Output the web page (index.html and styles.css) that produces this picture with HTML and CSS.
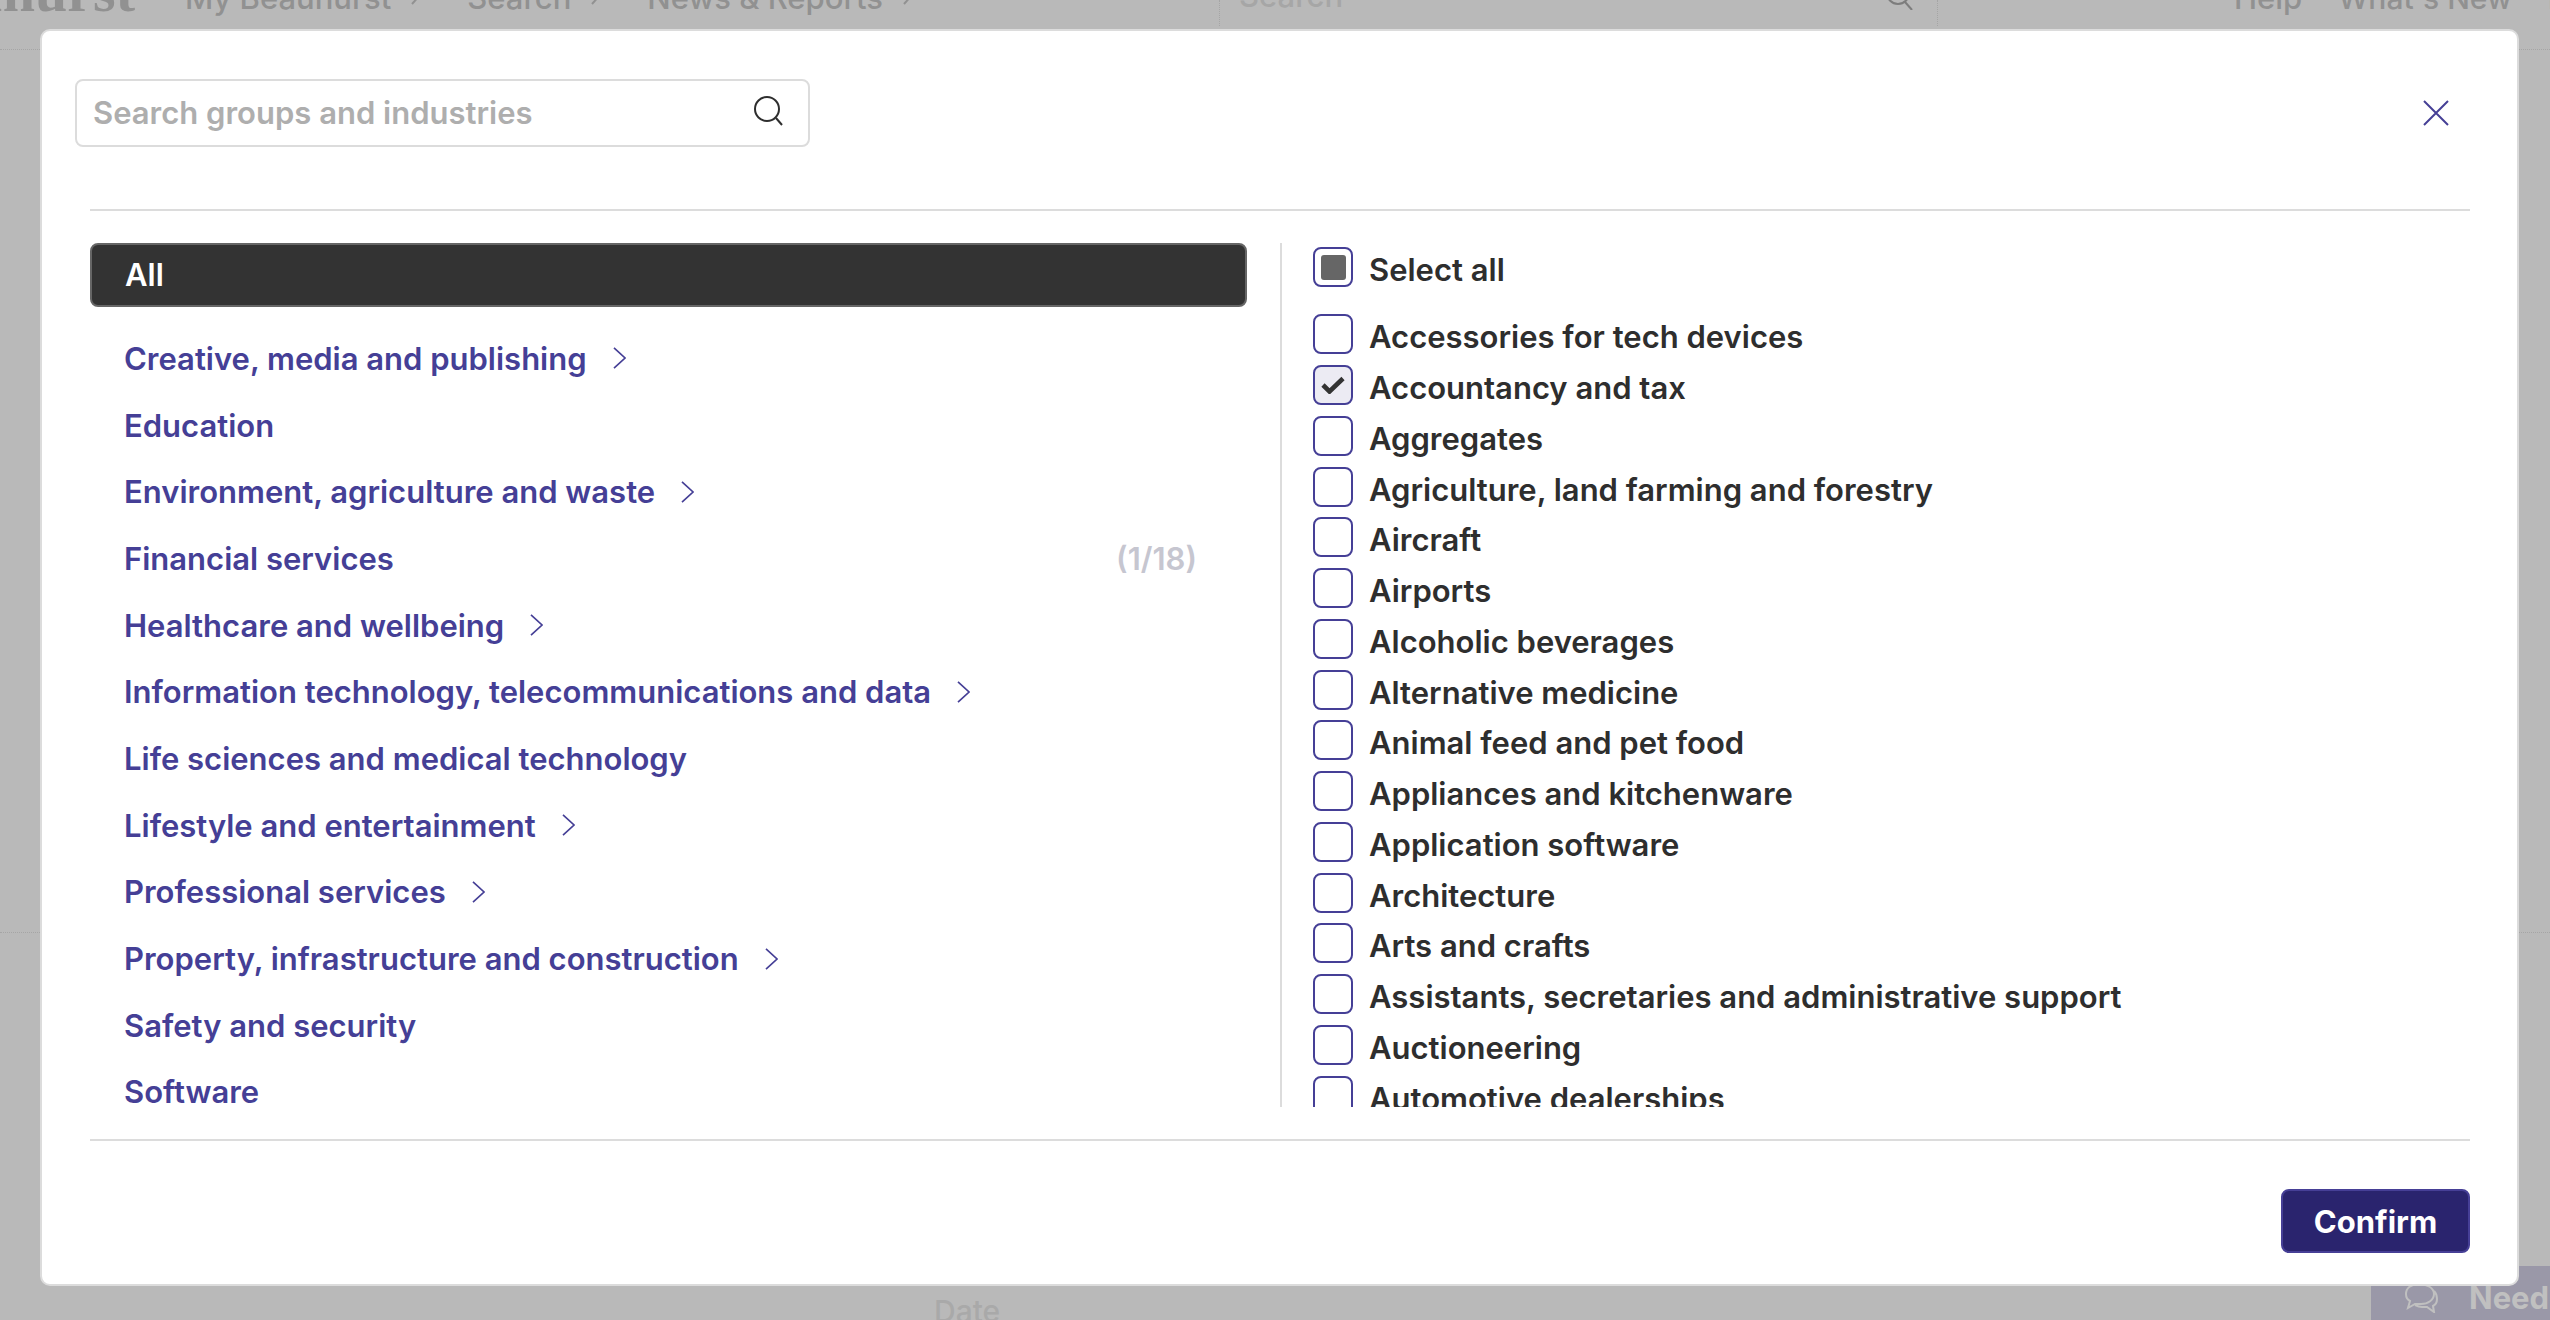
FILE: index.html
```html
<!DOCTYPE html>
<html lang="en">
<head>
    <meta charset="UTF-8">
    <title>Search groups and industries</title>
    <link rel="stylesheet" href="styles.css">
</head>
<body>
    <header class="topbar">
        <div class="logo"><span>Beauhurst</span></div>
        <nav class="nav">
            <span>My Beauhurst</span><svg class="nav-arrow" viewBox="0 0 11 22"><path d="M1 1l9 10-9 10"/></svg>
            <span>Search</span><svg class="nav-arrow" viewBox="0 0 11 22"><path d="M1 1l9 10-9 10"/></svg>
            <span>News &amp; Reports</span><svg class="nav-arrow" viewBox="0 0 11 22"><path d="M1 1l9 10-9 10"/></svg>
        </nav>
        <div class="top-search">
            <span class="top-search-text">Search</span>
            <svg class="top-search-icon" viewBox="0 0 30 30"><circle cx="13" cy="13" r="11"/><path d="M20 22l7 8"/></svg>
        </div>
        <div class="top-links">
            <span>Help</span>
            <span class="whats-new">What's New</span>
            <span>Log out</span>
        </div>
    </header>
    <div class="page-line"></div>
    <div class="page-date">Date</div>
    <div class="help-tab">
        <svg class="help-icon" viewBox="0 0 33 32"><path d="M14 3C6 3 1 7 1 13c0 3 2 6 4 7l-2 7 7-4h6c7 0 13-4 13-10S22 3 14 3Z"/><path d="M29 10c2 2 3 5 3 8 0 3-2 6-4 7l1 6-7-5h-5c-3 0-5-1-7-2"/></svg>
        <span>Need help?</span>
    </div>

    <div class="overlay">
        <div class="modal">
            <div class="modal-top">
                <div class="search-box">
                    <span class="search-placeholder">Search groups and industries</span>
                    <svg class="search-icon" viewBox="0 0 30 30"><circle cx="13" cy="13" r="12"/><path d="M22 22l6 7"/></svg>
                </div>
                <svg class="close-icon" viewBox="0 0 26 26"><path d="M1 1l24 24M25 1L1 25"/></svg>
            </div>

            <div class="modal-body">
                <div class="groups">
                    <div class="group-all">All</div>
                    <ul class="group-list">
                        <li class="group"><span>Creative, media and publishing</span><svg class="chevron" viewBox="0 0 14 24"><path d="M1 1l12 11L1 23"/></svg></li>
                        <li class="group"><span>Education</span></li>
                        <li class="group"><span>Environment, agriculture and waste</span><svg class="chevron" viewBox="0 0 14 24"><path d="M1 1l12 11L1 23"/></svg></li>
                        <li class="group"><span>Financial services</span><span class="count">(1/18)</span></li>
                        <li class="group"><span>Healthcare and wellbeing</span><svg class="chevron" viewBox="0 0 14 24"><path d="M1 1l12 11L1 23"/></svg></li>
                        <li class="group"><span>Information technology, telecommunications and data</span><svg class="chevron" viewBox="0 0 14 24"><path d="M1 1l12 11L1 23"/></svg></li>
                        <li class="group"><span>Life sciences and medical technology</span></li>
                        <li class="group"><span>Lifestyle and entertainment</span><svg class="chevron" viewBox="0 0 14 24"><path d="M1 1l12 11L1 23"/></svg></li>
                        <li class="group"><span>Professional services</span><svg class="chevron" viewBox="0 0 14 24"><path d="M1 1l12 11L1 23"/></svg></li>
                        <li class="group"><span>Property, infrastructure and construction</span><svg class="chevron" viewBox="0 0 14 24"><path d="M1 1l12 11L1 23"/></svg></li>
                        <li class="group"><span>Safety and security</span></li>
                        <li class="group"><span>Software</span></li>
                    </ul>
                </div>

                <div class="industries">
                    <div class="industry select-all"><span class="box box-partial"></span><span class="industry-name">Select all</span></div>
                    <div class="industry-list">
                        <div class="industry"><span class="box"></span><span class="industry-name">Accessories for tech devices</span></div>
                        <div class="industry"><span class="box box-checked"><svg class="tick" viewBox="0 0 24 18"><path d="M2 9l6.5 6.5L22 2.5"/></svg></span><span class="industry-name">Accountancy and tax</span></div>
                        <div class="industry"><span class="box"></span><span class="industry-name">Aggregates</span></div>
                        <div class="industry"><span class="box"></span><span class="industry-name">Agriculture, land farming and forestry</span></div>
                        <div class="industry"><span class="box"></span><span class="industry-name">Aircraft</span></div>
                        <div class="industry"><span class="box"></span><span class="industry-name">Airports</span></div>
                        <div class="industry"><span class="box"></span><span class="industry-name">Alcoholic beverages</span></div>
                        <div class="industry"><span class="box"></span><span class="industry-name">Alternative medicine</span></div>
                        <div class="industry"><span class="box"></span><span class="industry-name">Animal feed and pet food</span></div>
                        <div class="industry"><span class="box"></span><span class="industry-name">Appliances and kitchenware</span></div>
                        <div class="industry"><span class="box"></span><span class="industry-name">Application software</span></div>
                        <div class="industry"><span class="box"></span><span class="industry-name">Architecture</span></div>
                        <div class="industry"><span class="box"></span><span class="industry-name">Arts and crafts</span></div>
                        <div class="industry"><span class="box"></span><span class="industry-name">Assistants, secretaries and administrative support</span></div>
                        <div class="industry"><span class="box"></span><span class="industry-name">Auctioneering</span></div>
                        <div class="industry"><span class="box"></span><span class="industry-name">Automotive dealerships</span></div>
                    </div>
                </div>
            </div>

            <div class="modal-foot">
                <button class="confirm" type="button">Confirm</button>
            </div>
        </div>
    </div>
</body>
</html>
```

FILE: styles.css
```css
html, body {
    margin: 0;
    height: 100%;
    overflow: hidden;
}
body {
    background-color: #b9b9b9;
    font-family: Inter, "Liberation Sans", sans-serif;
    color: #2e2e2e;
}

/* page behind the dialog */
.topbar {
    height: 50px;
    box-sizing: border-box;
    display: flex;
    align-items: flex-start;
    overflow: hidden;
    color: #919191;
    font-size: 31px;
    font-weight: 500;
    line-height: 30px;
    border-bottom: 1px dotted #a5a5a5;
}
.logo {
    width: 135px;
    height: 50px;
    flex-shrink: 0;
    display: flex;
    justify-content: flex-end;
    overflow: hidden;
    white-space: nowrap;
    font-family: "Liberation Serif", serif;
    font-size: 58px;
    font-weight: 700;
    line-height: 60px;
}
.logo span {
    margin-top: -38px;
}
.nav {
    display: flex;
    width: 1034px;
    margin-left: 50px;
    margin-top: -17px;
    flex-shrink: 0;
    white-space: nowrap;
}
.nav-arrow {
    width: 11px;
    height: 22px;
    margin: 0 45px 0 20px;
    flex-shrink: 0;
    fill: none;
    stroke: #919191;
    stroke-width: 2;
}
.top-search {
    display: flex;
    justify-content: space-between;
    width: 719px;
    height: 26px;
    padding: 0 22px 0 19px;
    box-sizing: border-box;
    border-left: 1px dotted #a5a5a5;
    border-right: 1px dotted #a5a5a5;
    flex-shrink: 0;
}
.top-search-text {
    margin-top: -19px;
    color: #a6a6a6;
}
.top-search-icon {
    width: 30px;
    height: 30px;
    margin-top: -20px;
    fill: none;
    stroke: #7d7d7d;
    stroke-width: 2;
}
.top-links {
    display: flex;
    gap: 36px;
    margin-left: 296px;
    margin-top: -17px;
    flex-shrink: 0;
    white-space: nowrap;
}
.whats-new {
    font-size: 30px;
}
.page-line {
    position: absolute;
    left: 0;
    right: 0;
    top: 932px;
    border-top: 1px dotted #a5a5a5;
}
.page-date {
    position: absolute;
    left: 934px;
    top: 1293px;
    font-size: 30px;
    font-weight: 500;
    color: #a9a9a9;
}
.help-tab {
    position: absolute;
    left: 2371px;
    top: 1266px;
    width: 179px;
    height: 54px;
    display: flex;
    align-items: center;
    gap: 31px;
    overflow: hidden;
    white-space: nowrap;
    padding: 8px 0 0 34px;
    box-sizing: border-box;
    background-color: #9a98a8;
    color: #c0c0c0;
    font-size: 31px;
    font-weight: 700;
}
.help-icon {
    width: 33px;
    height: 32px;
    flex-shrink: 0;
    fill: none;
    stroke: #c0c0c0;
    stroke-width: 2;
}

/* dialog */
.overlay {
    position: absolute;
    top: 0;
    left: 0;
    right: 0;
    bottom: 0;
    padding: 29px 31px 34px 40px;
    box-sizing: border-box;
}
.modal {
    height: 100%;
    box-sizing: border-box;
    background-color: white;
    border: 2px solid #dcdcdc;
    border-radius: 10px;
    padding: 48px 47px 0 48px;
    display: flex;
    flex-direction: column;
}
.modal-top {
    display: flex;
    justify-content: space-between;
    align-items: center;
    height: 68px;
    margin-left: -15px;
    padding-bottom: 62px;
    border-bottom: 2px solid #dcdcdc;
    position: relative;
}
.modal-top::after {
    content: "";
    position: absolute;
    left: 0;
    bottom: -2px;
    width: 15px;
    height: 2px;
    background-color: white;
}
.search-box {
    width: 735px;
    height: 68px;
    box-sizing: border-box;
    border: 2px solid #dcdcdc;
    border-radius: 8px;
    padding: 0 18px 0 16px;
    display: flex;
    justify-content: space-between;
    align-items: center;
}
.search-placeholder {
    color: #aeaeae;
    font-size: 31px;
    font-weight: 600;
    margin-top: -2px;
}
.search-icon {
    width: 30px;
    height: 30px;
    margin-right: 6px;
    margin-top: -4px;
    fill: none;
    stroke: #2e2e2e;
    stroke-width: 2;
}
.close-icon {
    width: 26px;
    height: 26px;
    margin-right: 21px;
    fill: none;
    stroke: #453f96;
    stroke-width: 2;
}
.modal-body {
    display: flex;
    height: 864px;
    margin-top: 32px;
    overflow: hidden;
}
.groups {
    width: 1157px;
    flex-shrink: 0;
    padding-right: 33px;
}
.group-all {
    height: 64px;
    box-sizing: border-box;
    background-color: #333;
    border: 2px solid #666;
    border-radius: 8px;
    color: white;
    font-size: 31px;
    font-weight: 600;
    line-height: 60px;
    padding-left: 33px;
}
.group-list {
    list-style: none;
    margin: 18px 0 0 0;
    padding: 0;
}
.group {
    height: 66.7px;
    display: flex;
    align-items: center;
    padding: 0 50px 0 34px;
    color: #453f96;
    font-size: 31px;
    font-weight: 600;
}
.chevron {
    width: 13px;
    height: 22px;
    margin-left: 26px;
    fill: none;
    stroke: #453f96;
    stroke-width: 1.8;
}
.count {
    margin-left: auto;
    color: #c6c6d0;
}
.industries {
    flex: 1;
    border-left: 2px solid #dcdcdc;
    padding-left: 31px;
    overflow: hidden;
}
.industry {
    height: 50.75px;
    display: flex;
    align-items: center;
    gap: 16px;
    font-size: 31px;
    font-weight: 600;
    color: #2e2e2e;
    white-space: nowrap;
}
.industry-name {
    padding-top: 5px;
}
.select-all {
    margin-top: 4px;
    height: 40px;
    margin-bottom: 22px;
}
.box {
    width: 40px;
    height: 40px;
    flex-shrink: 0;
    box-sizing: border-box;
    border: 2px solid #453f96;
    border-radius: 8px;
    background-color: white;
    display: flex;
    align-items: center;
    justify-content: center;
}
.box-partial::before {
    content: "";
    width: 25px;
    height: 25px;
    border-radius: 3px;
    background-color: #666;
}
.box-checked {
    background-color: #ecebf3;
}
.tick {
    width: 24px;
    height: 18px;
    fill: none;
    stroke: #333;
    stroke-width: 4.6;
}
.modal-foot {
    margin-top: 32px;
    border-top: 2px solid #dcdcdc;
    padding-top: 48px;
    display: flex;
    justify-content: flex-end;
}
.confirm {
    width: 189px;
    height: 64px;
    background-color: #2a246e;
    border: 2px solid #463f96;
    border-radius: 8px;
    color: white;
    font-family: Inter, "Liberation Sans", sans-serif;
    font-size: 31px;
    font-weight: 700;
}
```
